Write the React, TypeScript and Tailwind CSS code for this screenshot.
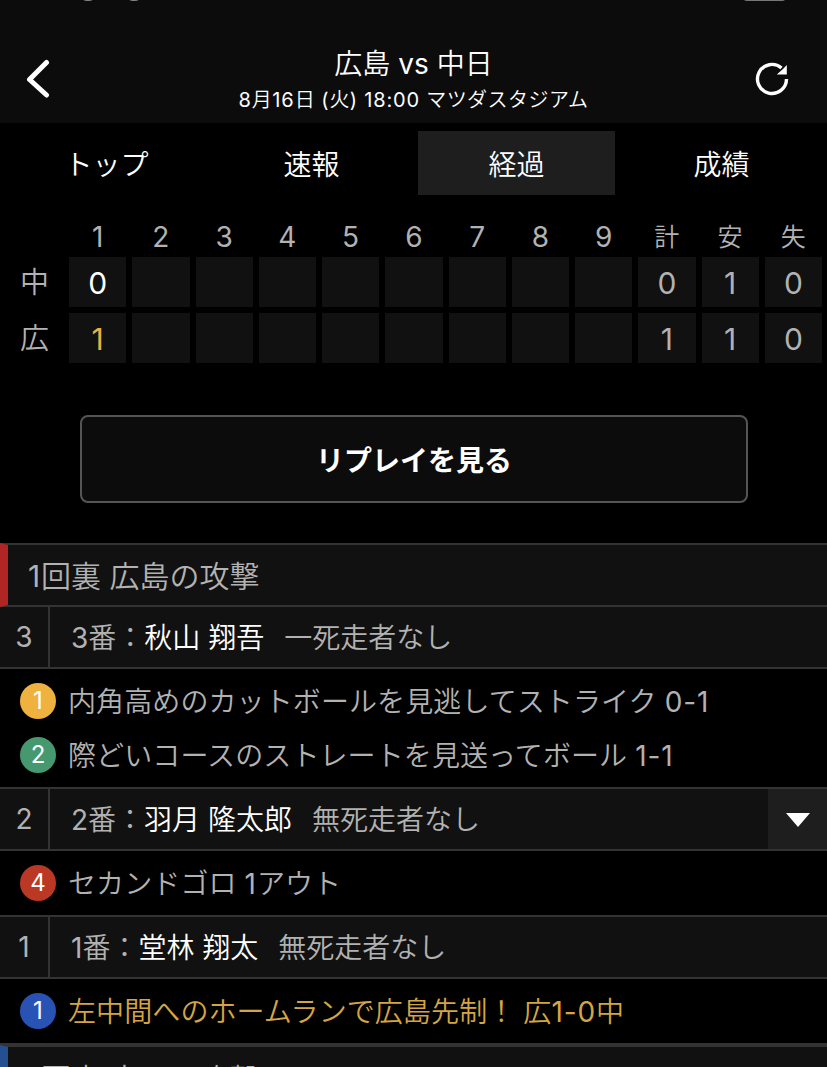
import React from 'react';

type PitchKind = 'strike' | 'ball' | 'out' | 'hit';

interface Pitch {
  no: number;
  kind: PitchKind;
  text: string;
  scored?: boolean;
}

interface AtBat {
  no: number;
  order: string;
  name: string;
  situation: string;
  expandable?: boolean;
  pitches: Pitch[];
}

const TABS = ['トップ', '速報', '経過', '成績'];
const ACTIVE_TAB = '経過';

const INNINGS = ['1', '2', '3', '4', '5', '6', '7', '8', '9'];
const TOTALS = ['計', '安', '失'];

const SCORES = [
  { team: '中', innings: ['0'], totals: ['0', '1', '0'], current: 'text-white' },
  { team: '広', innings: ['1'], totals: ['1', '1', '0'], current: 'text-[#edb141]' },
];

const AT_BATS: AtBat[] = [
  {
    no: 3,
    order: '3番',
    name: '秋山 翔吾',
    situation: '一死走者なし',
    pitches: [
      { no: 1, kind: 'strike', text: '内角高めのカットボールを見逃してストライク 0-1' },
      { no: 2, kind: 'ball', text: '際どいコースのストレートを見送ってボール 1-1' },
    ],
  },
  {
    no: 2,
    order: '2番',
    name: '羽月 隆太郎',
    situation: '無死走者なし',
    expandable: true,
    pitches: [{ no: 4, kind: 'out', text: 'セカンドゴロ 1アウト' }],
  },
  {
    no: 1,
    order: '1番',
    name: '堂林 翔太',
    situation: '無死走者なし',
    pitches: [{ no: 1, kind: 'hit', text: '左中間へのホームランで広島先制！ 広1-0中', scored: true }],
  },
];

const KIND_COLORS: Record<PitchKind, string> = {
  strike: 'bg-[#efb23e]',
  ball: 'bg-[#46996f]',
  out: 'bg-[#bb3825]',
  hit: 'bg-[#2853b5]',
};

// Latin letters and digits are set one step heavier than the kanji and kana
const Mixed = ({ text, className = '' }: { text: string; className?: string }) => (
  <>
    {text.split(/([\w:()-]+)/).map((part, idx) =>
      idx % 2 ? <span key={idx} className={`font-normal ${className}`}>{part}</span> : part
    )}
  </>
);

const StatusBar = () => (
  <svg className="block h-2 w-full" viewBox="0 0 827 8" fill="#8a8a8a">
    <ellipse cx="88" cy="-1" rx="5" ry="2" />
    <ellipse cx="134" cy="-1" rx="5" ry="2" />
    <rect x="743" y="-8" width="43" height="9" rx="4" fill="#777" />
  </svg>
);

const Header = () => (
  <header className="h-[123px] bg-[#0c0c0c] text-white">
    <StatusBar />
    <div className="flex h-[115px] items-start justify-between pt-[38px] pr-[37px] pl-[26px]">
      <button className="mt-[13px] w-9">
        <svg width="24" height="40" viewBox="0 0 24 40" fill="none" stroke="currentColor" strokeWidth="5" strokeLinecap="round" strokeLinejoin="round">
          <path d="M20.5 3.5 3.5 20.5 20.5 36" />
        </svg>
      </button>
      <div className="flex flex-col items-center pl-[11px]">
        <h1 className="text-[28px] leading-[37px]"><Mixed text="広島 vs 中日" /></h1>
        <p className="text-xl leading-[35px] tracking-[0.45px]"><Mixed text="8月16日 (火) 18:00 " className="tracking-[0.9px]" />マツダスタジアム</p>
      </div>
      <button className="mt-[15px]">
        <svg width="36" height="36" viewBox="0 0 36 36" fill="none">
          <path d="M32.5 18A14.5 14.5 0 1 1 27.5 7" stroke="currentColor" strokeWidth="3.4" />
          <path d="M32.8 4v9.5H22.8L29 8Z" fill="currentColor" />
        </svg>
      </button>
    </div>
  </header>
);

const ScoreBoard = () => (
  <div className="mt-[25px] grid grid-cols-[63px_repeat(12,1fr)] gap-x-1.5 gap-y-1.5 pr-[5px] text-center text-[30px] leading-[52px] text-[#b2b2b2]">
    <span />
    {INNINGS.map((inning) => (
      <span key={inning} className="h-[31px] text-[28px] leading-[35px] font-normal">{inning}</span>
    ))}
    {TOTALS.map((label) => (
      <span key={label} className="h-[31px] text-[25px] leading-[35px]">{label}</span>
    ))}
    {SCORES.map((row) => (
      <React.Fragment key={row.team}>
        <span className="h-[50px] pl-1.5 text-[29px] leading-[52px]">{row.team}</span>
        {INNINGS.map((inning, idx) => (
          <span key={inning} className={`h-[50px] bg-[#111] font-normal ${row.current}`}>{row.innings[idx]}</span>
        ))}
        {row.totals.map((total, idx) => (
          <span key={idx} className="h-[50px] bg-[#111] font-normal">{total}</span>
        ))}
      </React.Fragment>
    ))}
  </div>
);

const AtBatRow = ({ atBat, first }: { atBat: AtBat; first: boolean }) => (
  <>
    <div className={`flex border-[#333] bg-[#111] text-[28px] leading-[62px] text-[#b2b2b2] ${first ? 'h-[62px] border-b-2' : 'h-16 border-y-2'}`}>
      <span className="h-[60px] w-[50px] border-r-2 border-[#333] text-center leading-[61px] font-normal">{atBat.no}</span>
      <p className="h-[60px] flex-1 pl-[21px] whitespace-nowrap">
        <Mixed text={atBat.order} />：<span className="text-white">{atBat.name}</span>
        <span className="ml-5">{atBat.situation}</span>
      </p>
      {atBat.expandable && (
        <button className="flex h-[60px] w-[59px] items-center justify-center bg-[#1e1e1e] pt-0.5">
          <svg width="24" height="14" viewBox="0 0 24 14" fill="#fff">
            <path d="M0 0h24L12 14Z" />
          </svg>
        </button>
      )}
    </div>
    <ul className="flex flex-col gap-[18px] py-3.5 pl-5">
      {atBat.pitches.map((pitch) => (
        <li key={pitch.no} className="flex h-9 items-center gap-3">
          <span className={`size-9 rounded-full text-center text-2xl leading-9 font-normal text-white ${KIND_COLORS[pitch.kind]}`}>
            {pitch.no}
          </span>
          <span className={`h-9 text-[28px] leading-[38px] tracking-[0.1px] whitespace-nowrap ${pitch.scored ? 'text-[#d5a544]' : 'text-[#b2b2b2]'}`}>
            <Mixed text={pitch.text} className="tracking-[0.9px]" />
          </span>
        </li>
      ))}
    </ul>
  </>
);

export default function App() {
  return (
    <div className="h-[1067px] w-[827px] overflow-hidden bg-black font-['Inter','Noto_Sans_CJK_JP',sans-serif] font-[350]" lang="ja">
      <Header />

      {/* Tabs */}
      <nav className="mt-2 grid h-16 grid-cols-4 gap-2 pr-[7px] pl-2 text-[28px] text-white">
        {TABS.map((tab) => (
          <button key={tab} className={`h-16 pt-[3px] ${tab === ACTIVE_TAB ? 'bg-[#1e1e1e]' : ''}`}>{tab}</button>
        ))}
      </nav>

      <ScoreBoard />

      <button className="mx-20 mt-[52px] block h-[88px] w-[668px] rounded-lg border-2 border-[#555] bg-[#0c0c0c] pt-1 text-[28px] font-bold text-white">
        リプレイを見る
      </button>

      {/* Play by play */}
      <section className="mt-10">
        <h2 className="h-16 border-y-2 border-l-8 border-y-[#333] border-l-[#b22525] bg-[#111] pl-5 text-[30px] leading-[62px] text-[#b2b2b2]">
          <Mixed text="1回裏 広島の攻撃" className="tracking-[0.9px]" />
        </h2>
        {AT_BATS.map((atBat, idx) => (
          <AtBatRow key={atBat.no} atBat={atBat} first={idx === 0} />
        ))}
      </section>
      <section className="border-t-2 border-[#333]">
        <h2 className="h-16 border-y-2 border-l-8 border-y-[#333] border-l-[#25508f] bg-[#111] pl-5 text-[30px] leading-[64px] text-[#b2b2b2]">
          <Mixed text="1回表 中日の攻撃" className="tracking-[0.9px]" />
        </h2>
      </section>
    </div>
  );
}
